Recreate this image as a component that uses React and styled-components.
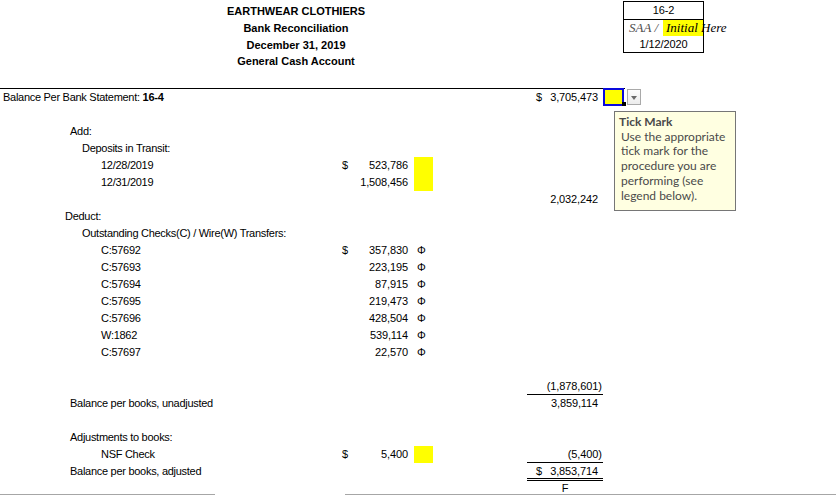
import React from "react";
import styled, { createGlobalStyle, css } from "styled-components";

const GlobalStyle = createGlobalStyle`
  html, body { margin: 0; padding: 0; background: #fff; overflow: hidden; }
  body { font-family: "Liberation Sans", Arial, sans-serif; font-size: 11px; color: #000; }
`;

const Sheet = styled.div`
  height: 494px;
  overflow: hidden;
  display: flex;
  flex-direction: column;
`;

const Header = styled.header`
  flex: none;
  height: 88px;
  display: flex;
  align-items: flex-start;
`;

const Titles = styled.div`
  width: 592px;
  padding-top: 3px;
  text-align: center;
  font-weight: bold;
  font-size: 11px;
`;

const TitleLine = styled.div`
  line-height: 16.8px;
  height: 16.8px;
`;

const RefBox = styled.div`
  margin-left: 31px;
  margin-top: 1px;
  width: 81px;
  box-sizing: border-box;
  border: 1px solid #000;
  display: flex;
  flex-direction: column;
`;

const RefCell = styled.div`
  height: ${(p) => p.$h}px;
  line-height: ${(p) => p.$h}px;
  text-align: center;
  font-size: 11px;
  letter-spacing: -0.1px;
  & + & { border-top: 1px solid #000; }
`;

const SignRow = styled.div`
  height: 16px;
  display: flex;
  border-top: 1px solid #000;
  font-family: "Liberation Serif", "Times New Roman", serif;
  font-style: italic;
  font-size: 13px;
  line-height: 16px;
  white-space: nowrap;
`;

const SignPart = styled.span`
  width: 40px;
  box-sizing: border-box;
  padding-left: ${(p) => (p.$hl ? 3 : 5)}px;
  color: ${(p) => (p.$hl ? "#000" : "#4d4d4d")};
  background: ${(p) => (p.$hl ? "#ffff00" : "transparent")};
  overflow: visible;
`;

const Body = styled.div`
  flex: none;
  display: flex;
  flex-direction: column;
`;

const Row = styled.div`
  flex: none;
  display: grid;
  grid-template-columns: 336px 74px 27px 90px 76px 21px;
  height: 17px;
  line-height: 17px;
  white-space: nowrap;
  ${(p) =>
    p.$top &&
    css`
      border-top: 1px solid #000;
      width: 625px;
    `}
`;

const Label = styled.div`
  padding-left: ${(p) => p.$indent}px;
  letter-spacing: -0.28px;
  b { font-weight: bold; letter-spacing: -0.2px; }
`;

const Amount = styled.div`
  display: flex;
  justify-content: space-between;
  box-sizing: border-box;
  padding-left: ${(p) => p.$pl}px;
  padding-right: ${(p) => p.$pr}px;
  letter-spacing: -0.12px;
  ${(p) =>
    p.$rule === "single" &&
    css`
      border-bottom: 1px solid #000;
      height: 17px;
    `}
  ${(p) =>
    p.$rule === "double" &&
    css`
      border-bottom: 3px double #000;
      height: 18px;
    `}
  ${(p) =>
    p.$center &&
    css`
      justify-content: center;
      padding: 0;
    `}
`;

const Paren = styled.span`
  margin-right: -3.7px;
`;

const Mark = styled.div`
  padding-left: ${(p) => (p.$kind === "yellow" ? 4 : 7)}px;
  font-size: 11px;
`;

const YellowBox = styled.div`
  width: 19px;
  height: 17px;
  background: #ffff00;
`;

const TickCell = styled.div`
  position: relative;
`;

const Selected = styled.div`
  box-sizing: border-box;
  margin-top: -1px;
  height: 18px;
  width: 21px;
  background: #ffff00;
  border: 2px solid #0a0adc;
`;

const FillHandle = styled.span`
  position: absolute;
  right: -3px;
  bottom: -1px;
  width: 4px;
  height: 4px;
  background: #000;
  border: 1px solid #fff;
  border-top: none;
  border-left: none;
`;

const DropButton = styled.div`
  position: absolute;
  left: 24px;
  top: 0;
  width: 14px;
  height: 16px;
  box-sizing: border-box;
  border: 1px solid #a9a9a9;
  background: linear-gradient(#fdfdfd, #ececec);
  display: flex;
  align-items: center;
  justify-content: center;
  &::after {
    content: "";
    border-top: 4px solid #6a6a6a;
    border-left: 3.5px solid transparent;
    border-right: 3.5px solid transparent;
    margin-top: 1px;
  }
`;

const Tooltip = styled.div`
  position: absolute;
  left: 11px;
  top: 22px;
  width: 122px;
  height: 100px;
  box-sizing: border-box;
  border: 1px solid #767676;
  background: #ffffe1;
  padding: 2px 4px 0;
  font-family: Lato, "Noto Sans", sans-serif;
  font-size: 12px;
  color: #4a4a4a;
  white-space: nowrap;
  z-index: 2;
`;

const TipTitle = styled.div`
  font-weight: bold;
  line-height: 15.7px;
`;

const TipLine = styled.div`
  line-height: 14.7px;
  padding-left: 2px;
`;

const Footer = styled.div`
  display: flex;
  gap: 130px;
`;

const GreyRule = styled.div`
  height: 1px;
  background: #a6a6a6;
  width: ${(p) => (p.$w ? `${p.$w}px` : "auto")};
  flex: ${(p) => (p.$w ? "none" : "1")};
`;

function Money({ value, dollar, neg, pl, pr, rule, center }) {
  return (
    <Amount $pl={pl} $pr={pr} $rule={rule} $center={center}>
      {center ? (
        <span>{value}</span>
      ) : (
        <>
          <span>{dollar ? "$" : ""}</span>
          <span>
            {value ? (neg ? <>({value}<Paren>)</Paren></> : value) : ""}
          </span>
        </>
      )}
    </Amount>
  );
}

const checks = [
  ["C:57692", "357,830", true],
  ["C:57693", "223,195"],
  ["C:57694", "87,915"],
  ["C:57695", "219,473"],
  ["C:57696", "428,504"],
  ["W:1862", "539,114"],
  ["C:57697", "22,570"],
];

const rows = [
  {},
  { label: "Add:", indent: 70 },
  { label: "Deposits in Transit:", indent: 82 },
  { label: "12/28/2019", indent: 101, inner: "523,786", innerDollar: true, mark: "yellow" },
  { label: "12/31/2019", indent: 101, inner: "1,508,456", mark: "yellow" },
  { outer: "2,032,242" },
  { label: "Deduct:", indent: 65 },
  { label: "Outstanding Checks(C) / Wire(W) Transfers:", indent: 82 },
  ...checks.map(([l, v, d]) => ({ label: l, indent: 101, inner: v, innerDollar: d, mark: "phi" })),
  {},
  { outer: "1,878,601", outerNeg: true, rule: "single" },
  { label: "Balance per books, unadjusted", indent: 70, outer: "3,859,114" },
  {},
  { label: "Adjustments to books:", indent: 70 },
  {
    label: "NSF Check",
    indent: 101,
    inner: "5,400",
    innerDollar: true,
    mark: "yellow",
    outer: "5,400",
    outerNeg: true,
    rule: "single",
  },
  { label: "Balance per books, adjusted", indent: 70, outer: "3,853,714", outerDollar: true, rule: "double" },
  { outer: "F", center: true },
];

export default function App() {
  return (
    <>
      <GlobalStyle />
      <Sheet>
        <Header>
          <Titles>
            <TitleLine>EARTHWEAR CLOTHIERS</TitleLine>
            <TitleLine>Bank Reconciliation</TitleLine>
            <TitleLine>December 31, 2019</TitleLine>
            <TitleLine>General Cash Account</TitleLine>
          </Titles>
          <RefBox>
            <RefCell $h={17}>16-2</RefCell>
            <SignRow>
              <SignPart>SAA / </SignPart>
              <SignPart $hl>Initial Here</SignPart>
            </SignRow>
            <RefCell $h={16}>1/12/2020</RefCell>
          </RefBox>
        </Header>
        <Body>
          <Row $top>
            <Label $indent={3}>
              Balance Per Bank Statement: <b>16-4</b>
            </Label>
            <div />
            <div />
            <div />
            <Money value="3,705,473" dollar pl={9} pr={5} />
            <TickCell>
              <Selected />
              <FillHandle />
              <DropButton />
              <Tooltip>
                <TipTitle>Tick Mark</TipTitle>
                <TipLine>Use the appropriate</TipLine>
                <TipLine>tick mark for the</TipLine>
                <TipLine>procedure you are</TipLine>
                <TipLine>performing (see</TipLine>
                <TipLine>legend below).</TipLine>
              </Tooltip>
            </TickCell>
          </Row>
          {rows.map((r, i) => (
            <Row key={i}>
              <Label $indent={r.indent || 0}>{r.label || ""}</Label>
              <Money value={r.inner} dollar={r.innerDollar} pl={6} pr={2} />
              <Mark $kind={r.mark}>
                {r.mark === "yellow" ? <YellowBox /> : r.mark === "phi" ? "Φ" : ""}
              </Mark>
              <div />
              <Money
                value={r.outer}
                dollar={r.outerDollar}
                neg={r.outerNeg}
                pl={9}
                pr={5}
                rule={r.rule}
                center={r.center}
              />
              <div />
            </Row>
          ))}
        </Body>
      </Sheet>
      <Footer>
        <GreyRule $w={215} />
        <GreyRule />
      </Footer>
    </>
  );
}
